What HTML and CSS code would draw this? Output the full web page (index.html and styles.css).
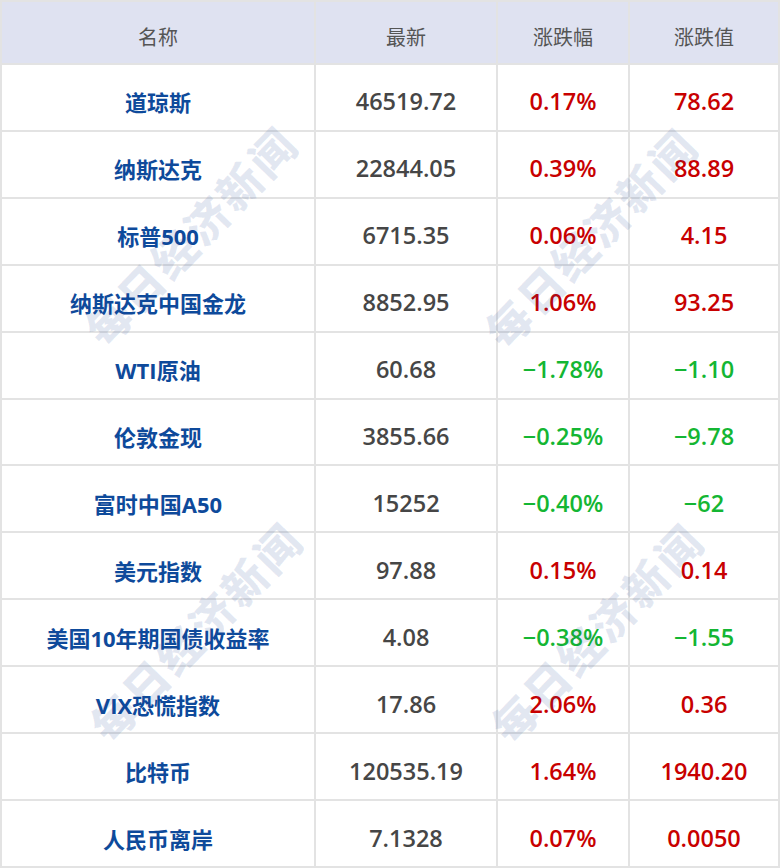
FILE: index.html
```html
<!DOCTYPE html>
<html lang="zh-CN">
<head>
<meta charset="utf-8">
<title>行情</title>
<link rel="stylesheet" href="styles.css">
</head>
<body>
<div class="board">
  <div class="grid">
    <div class="cell head">名称</div>
    <div class="cell head">最新</div>
    <div class="cell head">涨跌幅</div>
    <div class="cell head">涨跌值</div>

    <div class="cell name">道琼斯</div><div class="cell num">46519.72</div><div class="cell up">0.17%</div><div class="cell up">78.62</div>
    <div class="cell name">纳斯达克</div><div class="cell num">22844.05</div><div class="cell up">0.39%</div><div class="cell up">88.89</div>
    <div class="cell name">标普500</div><div class="cell num">6715.35</div><div class="cell up">0.06%</div><div class="cell up">4.15</div>
    <div class="cell name">纳斯达克中国金龙</div><div class="cell num">8852.95</div><div class="cell up">1.06%</div><div class="cell up">93.25</div>
    <div class="cell name">WTI原油</div><div class="cell num">60.68</div><div class="cell down">−1.78%</div><div class="cell down">−1.10</div>
    <div class="cell name">伦敦金现</div><div class="cell num">3855.66</div><div class="cell down">−0.25%</div><div class="cell down">−9.78</div>
    <div class="cell name">富时中国A50</div><div class="cell num">15252</div><div class="cell down">−0.40%</div><div class="cell down">−62</div>
    <div class="cell name">美元指数</div><div class="cell num">97.88</div><div class="cell up">0.15%</div><div class="cell up">0.14</div>
    <div class="cell name">美国10年期国债收益率</div><div class="cell num">4.08</div><div class="cell down">−0.38%</div><div class="cell down">−1.55</div>
    <div class="cell name">VIX恐慌指数</div><div class="cell num">17.86</div><div class="cell up">2.06%</div><div class="cell up">0.36</div>
    <div class="cell name">比特币</div><div class="cell num">120535.19</div><div class="cell up">1.64%</div><div class="cell up">1940.20</div>
    <div class="cell name">人民币离岸</div><div class="cell num">7.1328</div><div class="cell up">0.07%</div><div class="cell up">0.0050</div>
  </div>
  <div class="wm wm-ul">每日经济新闻</div>
  <div class="wm wm-ur">每日经济新闻</div>
  <div class="wm wm-ll">每日经济新闻</div>
  <div class="wm wm-lr">每日经济新闻</div>
</div>
</body>
</html>
```
FILE: styles.css
```css
html, body {
  margin: 0;
  padding: 0;
  background: #ffffff;
}

.board {
  position: relative;
  width: 780px;
  height: 868px;
  overflow: hidden;
}

.grid {
  display: grid;
  grid-template-columns: 312px 180px 130px 148px;
  grid-template-rows: 61px repeat(12, 1fr);
  gap: 2px;
  padding: 2px;
  height: 868px;
  box-sizing: border-box;
  background: #e3e3e3;
}

.cell {
  background: #ffffff;
  display: flex;
  align-items: center;
  justify-content: center;
  font-family: "Open Sans", "Noto Sans CJK SC", sans-serif;
  font-size: 23.5px;
  padding-top: 8px;
  box-sizing: border-box;
}

.head {
  background: #dfe2f1;
  color: #555555;
  font-family: "Noto Sans CJK SC", sans-serif;
  font-size: 20px;
  font-weight: 400;
  padding-top: 8px;
}

.name {
  color: #0e4a9b;
  font-weight: 700;
  font-size: 22px;
  font-family: "Open Sans", "Noto Sans CJK SC", sans-serif;
}

.num {
  color: #464646;
  font-weight: 600;
}

.up {
  color: #c80000;
  font-weight: 600;
}

.down {
  color: #14b633;
  font-weight: 600;
}

.wm {
  position: absolute;
  width: 320px;
  margin-left: -160px;
  margin-top: -28px;
  height: 56px;
  line-height: 56px;
  text-align: center;
  font-family: "Noto Sans CJK SC", sans-serif;
  font-weight: 900;
  font-size: 44px;
  letter-spacing: 3px;
  color: rgba(30, 70, 150, 0.12);
  transform: rotate(-46deg);
  pointer-events: none;
  white-space: nowrap;
}

.wm-ul { left: 190px; top: 235px; }
.wm-ur { left: 590px; top: 237px; }
.wm-ll { left: 195px; top: 631px; }
.wm-lr { left: 596px; top: 632px; }
```
